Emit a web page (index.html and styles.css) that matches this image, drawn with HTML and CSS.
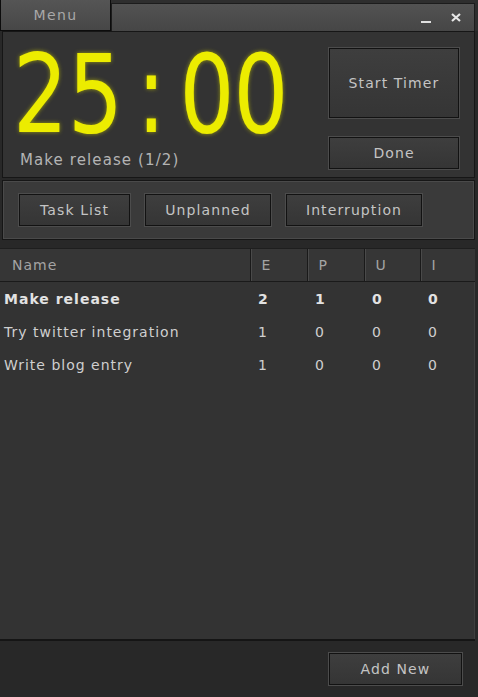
FILE: index.html
```html
<!DOCTYPE html>
<html lang="en">
<head>
    <meta charset="UTF-8">
    <meta name="viewport" content="width=device-width, initial-scale=1.0">
    <title>Pomodoro | Timer</title>
    <link rel="stylesheet" href="styles.css">
</head>
<body>
    <div class="app">
        <div class="titlebar">
            <div class="menu-tab">Menu</div>
            <div class="title-fill">
                <svg class="win-btn" width="12" height="12" viewBox="0 0 12 12"><rect x="1" y="9" width="10" height="2" fill="#e0e0e0"/></svg>
                <svg class="win-btn" width="12" height="12" viewBox="0 0 12 12"><path d="M2 2 L10 9 M10 2 L2 9" stroke="#e8e8e8" stroke-width="2.2"/></svg>
            </div>
        </div>

        <div class="timer-panel">
            <div class="clock-col">
                <div class="clock">
                    <span class="d1">2</span><span class="d2">5</span><span class="colon">:</span><span class="d3">0</span><span class="d4">0</span>
                </div>
                <div class="current-task">Make release (1/2)</div>
            </div>
            <div class="timer-actions">
                <button class="btn btn-start">Start Timer</button>
                <button class="btn btn-done">Done</button>
            </div>
        </div>

        <div class="mode-bar">
            <button class="btn btn-task">Task List</button>
            <button class="btn btn-unplanned">Unplanned</button>
            <button class="btn btn-interrupt">Interruption</button>
        </div>

        <div class="task-panel">
            <table class="tasks">
                <thead>
                    <tr><th class="col-name">Name</th><th class="col-e">E</th><th class="col-p">P</th><th class="col-u">U</th><th>I</th></tr>
                </thead>
                <tbody>
                    <tr class="active"><td>Make release</td><td>2</td><td>1</td><td>0</td><td>0</td></tr>
                    <tr><td>Try twitter integration</td><td>1</td><td>0</td><td>0</td><td>0</td></tr>
                    <tr><td>Write blog entry</td><td>1</td><td>0</td><td>0</td><td>0</td></tr>
                </tbody>
            </table>
        </div>

        <div class="footer">
            <button class="btn btn-add">Add New</button>
        </div>
    </div>
</body>
</html>
```

FILE: styles.css
```css
body {
    margin: 0;
    padding: 0;
    background: #282828;
    font-family: 'DejaVu Sans', Verdana, sans-serif;
    color: #c8c8c8;
}
.app {
    width: 478px;
    height: 697px;
    display: flex;
    flex-direction: column;
    background: #282828;
    overflow: hidden;
}
.titlebar {
    height: 31px;
    display: flex;
    align-items: flex-end;
    background: #2e2e2e;
}
.menu-tab {
    width: 109px;
    height: 30px;
    border: 1px solid #0c0c0c;
    border-top: none;
    background: linear-gradient(#555, #474747);
    color: #a8a8a8;
    font-size: 14px;
    letter-spacing: 1.4px;
    text-align: center;
    line-height: 30px;
}
.title-fill {
    flex: 1;
    height: 27px;
    margin-right: 3px;
    border: 1px solid #1c1c1c;
    border-bottom: none;
    background: linear-gradient(#525252, #464646);
    display: flex;
    align-items: center;
    justify-content: flex-end;
    gap: 18px;
    padding-right: 12px;
}
.win-btn {
    display: block;
}
.timer-panel {
    height: 145px;
    margin: 0 3px 0 2px;
    border: 1px solid #161616;
    background: #333;
    display: flex;
    justify-content: space-between;
}
.clock-col {
    flex: 1;
    min-width: 0;
    padding-left: 10px;
}
.clock {
    height: 100px;
    padding-top: 13px;
    display: flex;
    font-family: 'DejaVu Sans', sans-serif;
    font-size: 108px;
    line-height: 100px;
    color: #ecec00;
    text-shadow: 0 0 5px rgba(200, 200, 0, 0.7);
    transform: scaleX(0.8);
    transform-origin: left top;
}
.clock span {
    display: block;
    flex: none;
    text-align: center;
}
.clock .d1 { width: 68px; }
.clock .d2 { width: 70px; }
.clock .colon { width: 70px; }
.clock .d3 { width: 64px; }
.clock .d4 { width: 76px; }
.current-task {
    margin-top: 6px;
    padding-left: 7px;
    font-size: 15px;
    letter-spacing: 1.1px;
    color: #b4b4b4;
}
.timer-actions {
    flex: none;
    display: flex;
    flex-direction: column;
    padding: 16px 15px 0 0;
    gap: 19px;
}
.btn {
    font-family: 'DejaVu Sans', Verdana, sans-serif;
    font-size: 14px;
    letter-spacing: 1.1px;
    color: #c4c4c4;
    background: linear-gradient(#3e3e3e, #353535);
    border: 1px solid #121212;
    box-shadow: 0 0 0 1px #4c4c4c;
    padding: 0;
    cursor: pointer;
}
.btn:hover {
    background: #454545;
}
.btn-start {
    width: 130px;
    height: 70px;
}
.btn-done {
    width: 130px;
    height: 32px;
}
.mode-bar {
    height: 58px;
    margin: 2px 3px 0 2px;
    border: 1px solid #161616;
    box-shadow: inset 0 0 0 1px #4a4a4a;
    background: #3a3a3a;
    display: flex;
    align-items: center;
    padding-left: 16px;
    gap: 15px;
}
.mode-bar .btn {
    height: 32px;
}
.btn-task { width: 111px; }
.btn-unplanned { width: 126px; }
.btn-interrupt { width: 136px; }
.task-panel {
    flex: 1;
    margin: 8px 3px 0 0;
    background: #333;
    border-bottom: 2px solid #151515;
    box-shadow: inset -1px 0 0 #3e3e3e;
}
.tasks {
    width: 100%;
    border-collapse: collapse;
    table-layout: fixed;
    font-size: 14px;
    letter-spacing: 1px;
}
.tasks th {
    box-sizing: border-box;
    height: 33px;
    background: #363636;
    border-top: 1px solid #1e1e1e;
    border-bottom: 1px solid #1a1a1a;
    border-left: 1px solid #1a1a1a;
    box-shadow: inset 1px 0 0 #4a4a4a;
    color: #a4a4a4;
    font-weight: normal;
    text-align: left;
    padding: 0 0 0 11px;
}
.tasks th.col-name {
    width: 250px;
    padding-left: 12px;
    border-left: none;
    box-shadow: none;
}
.tasks th.col-e { width: 57px; }
.tasks th.col-p { width: 57px; }
.tasks th.col-u { width: 56px; }
.tasks td {
    height: 33px;
    padding: 0 0 0 8px;
    color: #cfcfcf;
    white-space: nowrap;
}
.tasks td:first-child {
    padding-left: 4px;
}
.tasks tr.active td {
    font-weight: bold;
    color: #e2e2e2;
}
.footer {
    height: 56px;
    display: flex;
    justify-content: flex-end;
    align-items: center;
    padding-right: 16px;
    background: #282828;
}
.btn-add {
    width: 133px;
    height: 32px;
}
```
